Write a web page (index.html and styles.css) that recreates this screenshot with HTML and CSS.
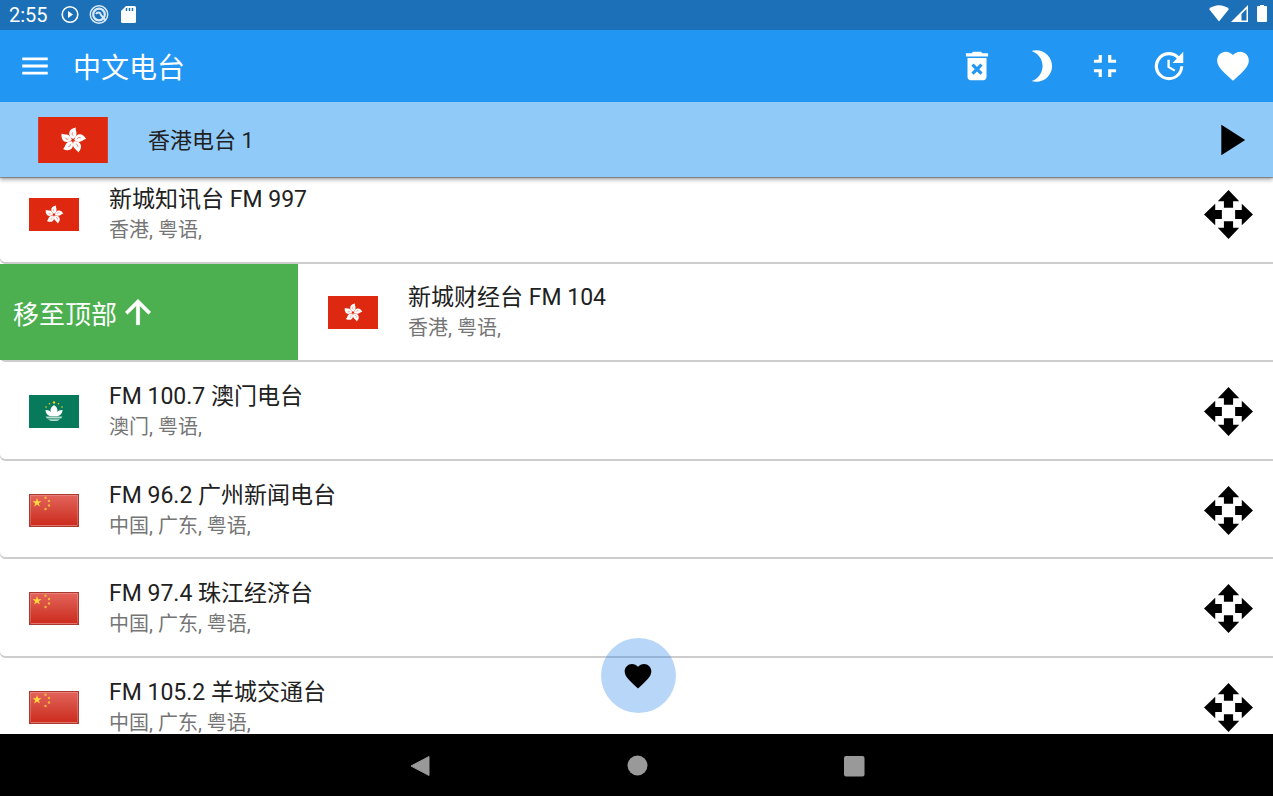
FILE: index.html
```html
<!DOCTYPE html>
<html lang="zh-CN">

<head>
    <meta charset="utf-8" />
    <meta name="viewport" content="width=device-width, initial-scale=1" />
    <title>中文电台</title>
    <link rel="stylesheet" href="styles.css">
</head>

<body>
    <svg class="defs" aria-hidden="true">
        <symbol id="flag-hk" viewBox="0 0 50 33">
            <rect width="50" height="33" fill="#de2910" />
            <g id="flower" transform="translate(25 16.700) rotate(6) scale(.94)">
                <g id="petal">
                    <path d="M0-1C-5-3-4.600-8.600 1.200-10 .4-8 4.600-4.600 0-1z" fill="#fff" />
                    <path d="M-.4-3.500C-1.400-4.300-1.400-5-.6-6.200" fill="none" stroke="#de2910" stroke-width=".4" />
                </g>
                <use href="#petal" transform="rotate(72)" />
                <use href="#petal" transform="rotate(144)" />
                <use href="#petal" transform="rotate(216)" />
                <use href="#petal" transform="rotate(288)" />
            </g>
        </symbol>
        <symbol id="flag-mo" viewBox="0 0 50 33">
            <rect width="50" height="33" fill="#067a5b" />
            <path d="M25 10c3.500 2.500 4 5 3 7 1.400-1.500 3.400-2.200 5.600-2-.2 3.400-2.200 5.800-5.400 6.200h-6.400c-3.200-.4-5.200-2.800-5.400-6.200 2.200-.2 4.200.5 5.600 2-1-2-.5-4.500 3-7z" fill="#fff" />
            <path d="M16.500 21.500h17a9 9 0 0 1-1.500 2H18a9 9 0 0 1-1.500-2zM19 24.300h12a9 9 0 0 1-3 1.700h-6a9 9 0 0 1-3-1.700z" fill="#b5dccf" />
            <g fill="#fbd116">
                <circle cx="25" cy="7.500" r="1.200" />
                <circle cx="20.500" cy="8.800" r=".8" />
                <circle cx="29.500" cy="8.800" r=".8" />
                <circle cx="17" cy="12" r=".8" />
                <circle cx="33" cy="12" r=".8" />
            </g>
        </symbol>
        <linearGradient id="gloss" x1="0" y1="0" x2="0" y2="1">
            <stop offset="0" stop-color="#e4645b" />
            <stop offset=".5" stop-color="#d6483c" />
            <stop offset="1" stop-color="#cc2a1c" />
        </linearGradient>
        <symbol id="flag-cn" viewBox="0 0 50 33">
            <rect x=".5" y=".5" width="49" height="32" fill="url(#gloss)" stroke="#a83a30" />
            <path d="M1.500 31.500v-30h47v30" fill="none" stroke="#fff" stroke-opacity=".2" />
            <path d="M2 31.500h46" stroke="#f0a49c" stroke-opacity=".6" />
            <path d="M8 4l1.100 3.200h3.400l-2.700 2 1 3.300L8 10.500l-2.800 2 1-3.300-2.700-2h3.400z" fill="#ffd93b" />
            <g fill="#f5b93a">
                <circle cx="16.500" cy="3.800" r="1.200" />
                <circle cx="20" cy="7" r="1.200" />
                <circle cx="20" cy="11.500" r="1.200" />
                <circle cx="16.500" cy="15" r="1.200" />
            </g>
        </symbol>
        <symbol id="icon-move" viewBox="0 0 48 48">
            <path id="arrow" d="M24 0l10.500 11h-6v6.500h-9V11h-6z" />
            <use href="#arrow" transform="rotate(90 24 24)" />
            <use href="#arrow" transform="rotate(180 24 24)" />
            <use href="#arrow" transform="rotate(270 24 24)" />
        </symbol>
        <symbol id="icon-heart" viewBox="0 0 24 24">
            <path d="M12 21.350l-1.450-1.320C5.400 15.360 2 12.280 2 8.500 2 5.420 4.420 3 7.500 3c1.740 0 3.410.81 4.500 2.090C13.090 3.810 14.760 3 16.500 3 19.580 3 22 5.420 22 8.500c0 3.780-3.400 6.860-8.550 11.540L12 21.350z" />
        </symbol>
    </svg>

    <div class="status">
        <span class="time">2:55</span>
        <svg viewBox="0 0 20 20"><circle cx="10" cy="9.500" r="7.800" fill="none" stroke="#fff" stroke-width="1.600" /><path d="M8 6v7l5-3.500z" /></svg>
        <svg viewBox="0 0 20 20"><circle cx="10" cy="9.500" r="8.700" fill="none" stroke="#d8eafa" stroke-width="1.500" /><circle cx="10" cy="9.500" r="5.800" fill="none" stroke="#d8eafa" stroke-width="2.200" /><path d="M7 9c1-2 4-2 4.500 0s2 3 5 6" fill="none" stroke="#d8eafa" stroke-width="2" /></svg>
        <svg viewBox="0 0 20 20"><path d="M8 1h8.500A1.500 1.500 0 0 1 18 2.500v14a1.500 1.500 0 0 1-1.500 1.500h-12A1.500 1.500 0 0 1 3 16.500V6z" /><path d="M8.500 3v3m3-3v3m3-3v3" stroke="#1b70b7" stroke-width="1.500" /></svg>
        <span class="space"></span>
        <svg viewBox="0 0 20 20"><path d="M0 4C6-1 14-1 20 4L10 16.500z" /></svg>
        <svg class="signal" viewBox="0 0 20 20"><path d="M18 0v17H1z" /><path d="M11.500 9v6.500h5V4z" fill="#1b70b7" /></svg>
        <svg class="battery" viewBox="0 0 10 20"><path d="M3 0h4v1h2a1 1 0 0 1 1 1v14a1 1 0 0 1-1 1H1a1 1 0 0 1-1-1V2a1 1 0 0 1 1-1h2z" /></svg>
    </div>

    <header class="appbar">
        <button class="menu" aria-label="菜单"><svg viewBox="0 0 24 24"><path d="M3 18h18v-2H3v2zm0-5h18v-2H3v2zm0-7v2h18V6H3z" /></svg></button>
        <h1>中文电台</h1>
        <button aria-label="删除"><svg viewBox="0 0 24 24"><path fill-rule="evenodd" d="M6 19c0 1.100.9 2 2 2h8c1.100 0 2-.9 2-2V7H6v12zm2.460-7.120l1.410-1.410L12 12.590l2.120-2.120 1.410 1.410L13.410 14l2.120 2.120-1.410 1.410L12 15.410l-2.120 2.120-1.410-1.410L10.590 14l-2.130-2.120zM15.500 4l-1-1h-5l-1 1H5v2h14V4z" /></svg></button>
        <button aria-label="夜间模式"><svg viewBox="0 0 24 24"><path d="M9 2c-1.050 0-2.050.16-3 .46 4.060 1.270 7 5.060 7 9.540 0 4.480-2.940 8.270-7 9.540.95.3 1.950.46 3 .46 5.520 0 10-4.480 10-10S14.520 2 9 2z" /></svg></button>
        <button aria-label="退出全屏"><svg viewBox="0 0 24 24"><path d="M5 16h3v3h2v-5H5v2zm3-8H5v2h5V5H8v3zm6 11h2v-3h3v-2h-5v5zm2-11V5h-2v5h5V8h-3z" /></svg></button>
        <button aria-label="更新"><svg viewBox="0 0 24 24"><path d="M21 10.120h-6.780l2.740-2.820c-2.730-2.700-7.150-2.800-9.880-.1-2.730 2.710-2.730 7.080 0 9.790s7.150 2.710 9.880 0C18.320 15.650 19 14.080 19 12.100h2c0 1.980-.88 4.550-2.640 6.290-3.510 3.480-9.210 3.480-12.720 0-3.500-3.470-3.530-9.110-.02-12.580s9.140-3.470 12.650 0L21 3v7.120zM12.500 8v4.250l3.500 2.080-.72 1.210L11 13V8h1.500z" /></svg></button>
        <button aria-label="收藏"><svg><use href="#icon-heart" /></svg></button>
    </header>

    <section class="player">
        <svg class="flag"><use href="#flag-hk" /></svg>
        <p>香港电台 1</p>
        <button aria-label="播放"><svg viewBox="0 0 24 24"><path d="M8 5v14l11-7z" /></svg></button>
    </section>

    <main>
        <ul class="stations">
            <li>
                <div class="card">
                    <svg class="flag"><use href="#flag-hk" /></svg>
                    <div class="info">
                        <h2>新城知讯台 FM 997</h2>
                        <p>香港, 粤语,</p>
                    </div>
                    <button aria-label="移动"><svg><use href="#icon-move" /></svg></button>
                </div>
            </li>
            <li>
                <div class="card swiped">
                    <div class="to_top">移至顶部 <svg viewBox="0 0 24 24"><path d="M4 12l1.410 1.410L11 7.830V20h2V7.830l5.580 5.590L20 12l-8-8-8 8z" stroke="#fff" stroke-width=".4" /></svg></div>
                    <svg class="flag"><use href="#flag-hk" /></svg>
                    <div class="info">
                        <h2>新城财经台 FM 104</h2>
                        <p>香港, 粤语,</p>
                    </div>
                </div>
            </li>
            <li>
                <div class="card">
                    <svg class="flag"><use href="#flag-mo" /></svg>
                    <div class="info">
                        <h2>FM 100.7 澳门电台</h2>
                        <p>澳门, 粤语,</p>
                    </div>
                    <button aria-label="移动"><svg><use href="#icon-move" /></svg></button>
                </div>
            </li>
            <li>
                <div class="card">
                    <svg class="flag"><use href="#flag-cn" /></svg>
                    <div class="info">
                        <h2>FM 96.2 广州新闻电台</h2>
                        <p>中国, 广东, 粤语,</p>
                    </div>
                    <button aria-label="移动"><svg><use href="#icon-move" /></svg></button>
                </div>
            </li>
            <li>
                <div class="card">
                    <svg class="flag"><use href="#flag-cn" /></svg>
                    <div class="info">
                        <h2>FM 97.4 珠江经济台</h2>
                        <p>中国, 广东, 粤语,</p>
                    </div>
                    <button aria-label="移动"><svg><use href="#icon-move" /></svg></button>
                </div>
            </li>
            <li>
                <div class="card">
                    <svg class="flag"><use href="#flag-cn" /></svg>
                    <div class="info">
                        <h2>FM 105.2 羊城交通台</h2>
                        <p>中国, 广东, 粤语,</p>
                    </div>
                    <button aria-label="移动"><svg><use href="#icon-move" /></svg></button>
                </div>
            </li>
        </ul>
        <button class="fab" aria-label="我的收藏"><svg><use href="#icon-heart" /></svg></button>
    </main>

    <nav class="sysnav">
        <button aria-label="返回"><svg viewBox="0 0 24 24"><path d="M21 2.500v19L3 12z" stroke="#999" stroke-linejoin="round" /></svg></button>
        <button aria-label="主页"><svg viewBox="0 0 24 24"><circle cx="12.500" cy="11.500" r="10" /></svg></button>
        <button aria-label="最近任务"><svg viewBox="0 0 24 24"><rect x="2" y="2" width="20.500" height="20.500" rx="2" /></svg></button>
    </nav>
</body>

</html>
```

FILE: styles.css
```css
* {
    margin: 0;
    padding: 0;
    box-sizing: border-box;
}

body {
    display: flex;
    flex-direction: column;
    height: 100vh;
    overflow: hidden;
    background: #fff;
    color: #212121;
    font-family: Roboto, "Noto Sans CJK SC", sans-serif;
}

ul {
    list-style: none;
}

h1,
h2 {
    font-weight: 400;
}

svg {
    display: block;
    flex: none;
    fill: currentColor;
}

button {
    display: flex;
    flex: none;
    align-items: center;
    justify-content: center;
    border: none;
    background: none;
    color: inherit;
    cursor: pointer;
}

.defs {
    position: absolute;
    width: 0;
    height: 0;
}

/* status bar */
.status {
    display: flex;
    flex: none;
    align-items: center;
    gap: 9px;
    height: 30px;
    padding: 0 6px 0 9px;
    background: #1b70b7;
    color: #fff;
}

.status svg {
    width: 20px;
    height: 20px;
}

.status .signal {
    margin-left: -8px;
}

.status .battery {
    width: 10px;
    margin-left: -2px;
}

.time {
    margin-right: 3px;
    font-size: 20px;
    line-height: 30px;
}

.space {
    flex: 1;
}

/* app bar */
.appbar {
    display: flex;
    flex: none;
    align-items: center;
    height: 72px;
    padding-right: 8px;
    background: #2196f3;
    color: #fff;
}

.appbar h1 {
    flex: 1;
    padding: 5px 0 0 3px;
    font-size: 28px;
    line-height: 40px;
}

.appbar button {
    width: 64px;
    height: 64px;
}

.appbar svg {
    width: 38px;
    height: 38px;
}

.appbar .menu {
    width: 70px;
}

.appbar .menu svg {
    width: 34px;
    height: 34px;
}

/* now playing */
.player {
    position: relative;
    z-index: 1;
    display: flex;
    flex: none;
    align-items: center;
    gap: 40px;
    height: 75px;
    padding: 0 17px 0 38px;
    background: #90caf9;
    box-shadow: 0 3px 4px rgba(0, 0, 0, 0.3), 0 1px 1px rgba(0, 0, 0, 0.3);
}

.player .flag {
    width: 70px;
    height: 46px;
}

.player p {
    flex: 1;
    padding-top: 3px;
    font-size: 22px;
    line-height: 30px;
}

.player button,
.player button svg {
    width: 52px;
    height: 52px;
    color: #000;
}

/* station list */
main {
    position: relative;
    flex: 1;
    min-height: 0;
    overflow: hidden;
}

.stations {
    margin-top: -12px;
}

.stations li {
    height: 98px;
    padding-bottom: 2px;
}

.stations li:nth-child(odd) {
    height: 99px;
}

.card {
    display: flex;
    align-items: center;
    gap: 30px;
    height: 100%;
    padding: 2px 20px 0 29px;
    border-bottom-left-radius: 5px;
    background: #fff;
    box-shadow: 0 2px 0 #cdcdcd;
}

.card .flag {
    width: 50px;
    height: 33px;
}

.info {
    flex: 1;
    padding-top: 1px;
}

.info h2 {
    font-size: 23px;
    line-height: 30px;
}

.info p {
    color: #757575;
    font-size: 20px;
    line-height: 30px;
}

.card button,
.card button svg {
    width: 49px;
    height: 49px;
    color: #000;
}

.swiped {
    padding: 0;
}

.to_top {
    display: flex;
    flex: none;
    align-items: center;
    gap: 2px;
    width: 298px;
    height: 100%;
    padding-left: 13px;
    background: #4caf50;
    color: #fff;
    font-size: 26px;
}

.to_top svg {
    width: 38px;
    height: 38px;
}

.fab {
    position: absolute;
    bottom: 21px;
    left: 50%;
    width: 75px;
    height: 75px;
    margin-left: -36px;
    border-radius: 50%;
    background: rgba(40, 130, 235, 0.33);
    color: #000;
}

.fab svg {
    width: 32px;
    height: 32px;
}

/* system navigation */
.sysnav {
    display: flex;
    flex: none;
    justify-content: center;
    height: 62px;
    padding-top: 2px;
    background: #000;
    color: #999;
}

.sysnav button {
    width: 217px;
}

.sysnav svg {
    width: 24px;
    height: 24px;
}
```
